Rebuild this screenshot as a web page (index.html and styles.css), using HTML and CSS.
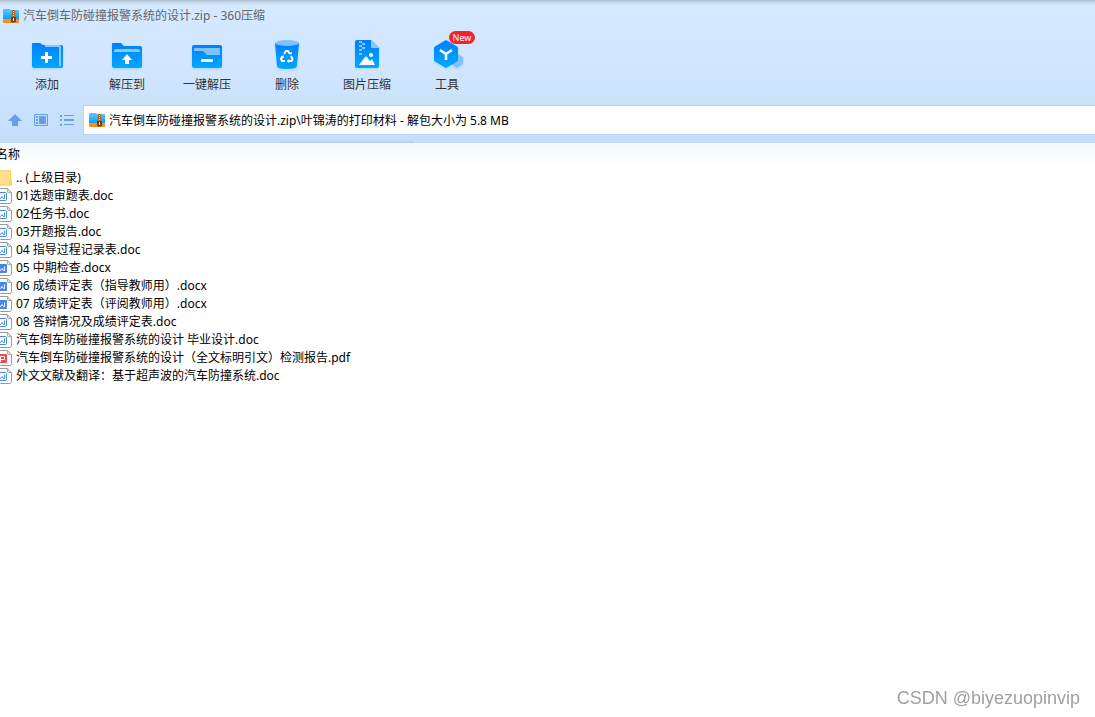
FILE: index.html
```
<!DOCTYPE html>
<html lang="zh-CN">
<head>
<meta charset="utf-8">
<meta name="viewport" content="width=device-width, initial-scale=1">
<title>汽车倒车防碰撞报警系统的设计.zip - 360压缩</title>
<link rel="stylesheet" href="styles.css">
</head>
<body>
<svg class="defs" aria-hidden="true">
  <defs>
    <linearGradient id="blue" x1="0" y1="0" x2="0" y2="1"><stop offset="0" stop-color="#0080ff"/><stop offset="1" stop-color="#00a8ff"/></linearGradient>
    <linearGradient id="archiveBlue" x1="0" y1="0" x2="0" y2="1"><stop offset="0" stop-color="#5bc8fb"/><stop offset="1" stop-color="#149bee"/></linearGradient>
    <symbol id="archive" viewBox="0 0 16 14">
      <path d="M0 1q0-1 1-1h6l1 1h7q1 0 1 1v8H0z" fill="url(#archiveBlue)"/>
      <path d="M0 10h16v2H0z" fill="#8fc93a"/>
      <path d="M0 11h16v2q0 1-1 1H1q-1 0-1-1z" fill="#ff8a18"/>
      <path d="M9 1h3v13H9z" fill="#a8622a"/>
      <path d="M10 2h1v1h-1zM10 4h1v1h-1zM10 6h1v1h-1z" fill="#ffe3b0"/>
      <path d="M8 8h5v5H8z" fill="#7a3d14"/><path d="M10 9h1v3h-1z" fill="#ffe3b0"/>
    </symbol>
    <symbol id="page" viewBox="0 0 16 16">
      <path d="M2.500.500h9l4 4v9q0 2-2 2h-9q-2 0-2-2z" fill="#fff" stroke="#999"/>
      <path d="M11.500.500l4 4h-3q-1 0-1-1z" fill="#ddd" stroke="#aaa"/>
    </symbol>
    <symbol id="doc" viewBox="0 0 16 16">
      <use href="#page"/>
      <rect x=".5" y="4.500" width="10" height="8" rx="1" fill="#fff" stroke="#4a86e8"/>
      <path d="M3.500 6.500v4h1l1.500-2 1.500 2h1v-4" fill="none" stroke="#4a86e8"/>
    </symbol>
    <symbol id="docx" viewBox="0 0 16 16">
      <use href="#page"/>
      <rect y="4" width="11" height="9" rx="1" fill="#4a86e8"/>
      <path d="M3.500 6.500v4h1l1.500-2 1.500 2h1v-4" fill="none" stroke="#fff"/>
    </symbol>
    <symbol id="pdf" viewBox="0 0 16 16">
      <use href="#page"/>
      <rect y="4" width="11" height="9" rx="1" fill="#ed4c50"/>
      <path d="M4.500 12V6.500h4v3h-4" fill="none" stroke="#fff"/>
    </symbol>
    <symbol id="folder" viewBox="0 0 17 16">
      <path d="M0 0h16v10l1 1v5H0z" fill="#ffe28a"/>
      <path d="M0 .5h15.500v10l1 .5v4.500H0M14.500 15v-4.500h1" fill="none" stroke="#efcb58"/>
    </symbol>
  </defs>
</svg>

<header class="chrome">
  <div class="titlebar">
    <svg class="archive-icon" aria-hidden="true"><use href="#archive"/></svg>
    <h1 class="title">汽车倒车防碰撞报警系统的设计.zip - 360压缩</h1>
  </div>

  <nav class="toolbar" aria-label="工具栏">
    <button class="tool" type="button">
      <svg class="tool-icon" viewBox="0 0 32 32" aria-hidden="true">
        <path d="M1 4q0-1 1-1h7l3 2h18q2 0 2 2v19q0 2-2 2H3q-2 0-2-2z" fill="url(#blue)"/>
        <path d="M14 5h14q2 0 2 2v19h-2V8q0-1-1-1H14z" fill="#8ac7ff"/>
        <path d="M14 12h3v4h4v3h-4v4h-3v-4h-4v-3h4z" fill="#fff"/>
      </svg>
      <span>添加</span>
    </button>
    <button class="tool" type="button">
      <svg class="tool-icon" viewBox="0 0 32 32" aria-hidden="true">
        <path d="M1 4q0-1 1-1h8l3 3h16q2 0 2 2v18q0 2-2 2H3q-2 0-2-2z" fill="url(#blue)"/>
        <path d="M3 12v-1q0-2 2-2h22q2 0 2 2v1z" fill="#8ac7ff"/>
        <path d="M16 14l5 6h-3v4h-4v-4h-3z" fill="#fff"/>
      </svg>
      <span>解压到</span>
    </button>
    <button class="tool" type="button">
      <svg class="tool-icon" viewBox="0 0 32 32" aria-hidden="true">
        <rect x="1" y="5" width="30" height="23" rx="2" fill="url(#blue)"/>
        <path d="M3 11V9q0-1 1-1h24q1 0 1 1v6H16l-4-4z" fill="#80c2ff"/>
        <rect x="10" y="19" width="12" height="3" rx="1" fill="#fff"/>
      </svg>
      <span>一键解压</span>
    </button>
    <button class="tool" type="button">
      <svg class="tool-icon" viewBox="0 0 32 32" aria-hidden="true">
        <path d="M4 3h24l-2 23q0 3-10 3T6 26z" fill="url(#blue)"/>
        <ellipse cx="16" cy="3" rx="12" ry="3" fill="#7fc2ff"/>
        <g fill="none" stroke="#fff" stroke-width="2">
          <path d="M13 14l2-3h2l2 3"/><path d="M20 16l1.500 3-1 2h-3"/><path d="M14 21h-3l-1-2 1.500-3"/>
        </g>
        <path d="M17.500 14l3 .5.5-3zM18 19v4l-2.500-2zM9.500 17l3-2 .5 3z" fill="#fff"/>
      </svg>
      <span>删除</span>
    </button>
    <button class="tool" type="button">
      <svg class="tool-icon" viewBox="0 0 32 32" aria-hidden="true">
        <path d="M4 2q0-2 2-2h14l8 8v18q0 2-2 2H6q-2 0-2-2z" fill="url(#blue)"/>
        <path d="M20 0l8 8h-7q-1 0-1-1z" fill="#8ac7ff"/>
        <path d="M8 1h3v2H8zM11 3h3v2h-3zM8 5h3v2H8zM11 7h3v2h-3zM8 9h3v2H8zM8 13h3v2H8z" fill="#8ac7ff"/>
        <circle cx="20" cy="15" r="2" fill="#fff"/>
        <path d="M8 25l6-8q1-1 2 0l3 4 2-2 3 6z" fill="#fff"/>
      </svg>
      <span>图片压缩</span>
    </button>
    <button class="tool" type="button">
      <svg class="tool-icon" viewBox="0 0 32 32" aria-hidden="true">
        <path d="M27 14l5 3v7l-6 4-6-4v-6z" fill="#80c2ff"/>
        <path d="M14 .5q1-.6 2 0l10 6q1 .5 1 1.500v12q0 1-1 1.500l-10 6q-1 .6-2 0l-10-6q-1-.5-1-1.500V8q0-1 1-1.500z" fill="url(#blue)"/>
        <path d="M9 10l6 4 6-4M15 14v6" fill="none" stroke="#fff" stroke-width="2.500"/>
      </svg>
      <span>工具</span>
      <span class="badge">New</span>
    </button>
  </nav>

  <div class="location">
    <div class="nav-buttons">
      <button class="nav-button" type="button" aria-label="上级目录">
        <svg class="nav-icon" viewBox="0 0 16 16" aria-hidden="true"><path d="M8 2l7 7h-4v5H5V9H1z" fill="#669ded"/></svg>
      </button>
      <button class="nav-button" type="button" aria-label="缩略图">
        <svg class="nav-icon" viewBox="0 0 16 16" aria-hidden="true"><path d="M1.500 2.500h13v11h-13z" fill="none" stroke="#669ded"/><path d="M3 4h2v2H3zM3 7h2v2H3zM3 10h2v2H3zM6 4h7v8H6z" fill="#669ded"/></svg>
      </button>
      <button class="nav-button" type="button" aria-label="列表">
        <svg class="nav-icon" viewBox="0 0 16 16" aria-hidden="true"><path d="M1 3h2v2H1zM1 7h2v2H1zM1 12h2v2H1zM5 3h10v1H5zM5 7h10v2H5zM5 12h10v1H5z" fill="#669ded"/></svg>
      </button>
    </div>
    <label class="address">
      <svg class="archive-icon" aria-hidden="true"><use href="#archive"/></svg>
      <input class="address-input" type="text" aria-label="地址" value="汽车倒车防碰撞报警系统的设计.zip\叶锦涛的打印材料 - 解包大小为 5.8 MB">
    </label>
  </div>
</header>

<main class="files">
  <table class="file-table">
    <thead><tr><th scope="col">名称</th></tr></thead>
    <tbody>
      <tr><td><span class="file"><svg class="file-icon" aria-hidden="true"><use href="#folder"/></svg>.. (上级目录)</span></td></tr>
      <tr><td><span class="file"><svg class="file-icon" aria-hidden="true"><use href="#doc"/></svg>01选题审题表.doc</span></td></tr>
      <tr><td><span class="file"><svg class="file-icon" aria-hidden="true"><use href="#doc"/></svg>02任务书.doc</span></td></tr>
      <tr><td><span class="file"><svg class="file-icon" aria-hidden="true"><use href="#doc"/></svg>03开题报告.doc</span></td></tr>
      <tr><td><span class="file"><svg class="file-icon" aria-hidden="true"><use href="#doc"/></svg>04 指导过程记录表.doc</span></td></tr>
      <tr><td><span class="file"><svg class="file-icon" aria-hidden="true"><use href="#docx"/></svg>05 中期检查.docx</span></td></tr>
      <tr><td><span class="file"><svg class="file-icon" aria-hidden="true"><use href="#docx"/></svg>06 成绩评定表（指导教师用）.docx</span></td></tr>
      <tr><td><span class="file"><svg class="file-icon" aria-hidden="true"><use href="#docx"/></svg>07 成绩评定表（评阅教师用）.docx</span></td></tr>
      <tr><td><span class="file"><svg class="file-icon" aria-hidden="true"><use href="#doc"/></svg>08 答辩情况及成绩评定表.doc</span></td></tr>
      <tr><td><span class="file"><svg class="file-icon" aria-hidden="true"><use href="#doc"/></svg>汽车倒车防碰撞报警系统的设计 毕业设计.doc</span></td></tr>
      <tr><td><span class="file"><svg class="file-icon" aria-hidden="true"><use href="#pdf"/></svg>汽车倒车防碰撞报警系统的设计（全文标明引文）检测报告.pdf</span></td></tr>
      <tr><td><span class="file"><svg class="file-icon" aria-hidden="true"><use href="#doc"/></svg>外文文献及翻译：基于超声波的汽车防撞系统.doc</span></td></tr>
    </tbody>
  </table>
</main>
<div class="watermark">CSDN @biyezuopinvip</div>
</body>
</html>
```

FILE: styles.css
```
* {
  box-sizing: border-box;
}

body {
  margin: 0;
  min-height: 100vh;
  overflow-x: hidden;
  background: #fff;
  color: #000;
  font: 12px/18px "Noto Sans", "Noto Sans CJK SC", sans-serif;
}

button,
input {
  margin: 0;
  padding: 0;
  border: 0;
  background: none;
  color: inherit;
  font: inherit;
}

svg {
  display: block;
  flex: none;
}

.defs {
  position: absolute;
  width: 0;
  height: 0;
}

.chrome {
  padding-bottom: 8px;
  background:
    linear-gradient(#adc0d0, #c5d8e9 50%, transparent) top / 100% 5px no-repeat,
    linear-gradient(#b7d3ef, #b7d3ef) 280px 100% / 134px 2px no-repeat,
    linear-gradient(#d5eaff, #d1e6fd 50%, #c3defa);
}

.titlebar {
  display: flex;
  align-items: center;
  gap: 4px;
  height: 32px;
  padding-left: 3px;
}

.archive-icon {
  width: 16px;
  height: 14px;
}

.title {
  margin: 0;
  color: #666;
  font-size: 12px;
  font-weight: 400;
}

.toolbar {
  display: flex;
  padding: 6px 7px 0;
}

.tool {
  position: relative;
  display: flex;
  flex-direction: column;
  align-items: center;
  justify-content: flex-start;
  gap: 4px;
  width: 80px;
  height: 67px;
  padding-top: 2px;
  color: #333;
}

.tool-icon {
  width: 32px;
  height: 32px;
  overflow: visible;
  filter: drop-shadow(0 1px 1px #0080ff30);
}

.badge {
  position: absolute;
  top: -7px;
  left: 42px;
  width: 26px;
  border-radius: 7px;
  background: #f5222d;
  color: #fff;
  font-size: 9px;
  line-height: 13px;
  text-align: center;
}

.location {
  display: flex;
  align-items: center;
}

.nav-buttons {
  display: flex;
  gap: 10px;
  padding: 0 8px 0 7px;
}

.nav-icon {
  width: 16px;
  height: 16px;
}

.address {
  display: flex;
  flex: 1;
  align-items: center;
  gap: 4px;
  height: 30px;
  padding-left: 5px;
  border: 1px solid #b7d4f2;
  border-right: 0;
  background: #fff;
}

.address-input {
  flex: 1;
  min-width: 0;
  height: 28px;
  outline: 0;
}

.files {
  background: linear-gradient(#f3f9ff, #fff) top / 100% 24px no-repeat;
}

.file-table {
  width: 100%;
  margin-left: -4px;
  border-spacing: 0;
}

.file-table th {
  height: 26px;
  padding: 0 0 3px;
  font-weight: 400;
  text-align: left;
}

.file-table td {
  padding: 0;
}

.file {
  display: flex;
  align-items: center;
  gap: 4px;
  height: 18px;
  white-space: nowrap;
}

.file-icon {
  width: 16px;
  height: 16px;
}

.watermark {
  position: fixed;
  right: 15px;
  bottom: 8px;
  color: #a0a0a0;
  font: 18px/22px "Liberation Sans", Arial, sans-serif;
}
```
